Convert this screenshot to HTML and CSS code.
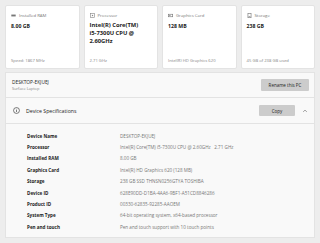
FILE: index.html
```
<!DOCTYPE html>
<html>
<head>
<meta charset="utf-8">
<link rel="stylesheet" href="styles.css">
</head>
<body>
<div class="page">
  <div class="cards">
    <div class="card">
      <div class="card-label"><svg class="ico" viewBox="0 0 8 8"><rect x="0.5" y="2.5" width="7" height="3" fill="#777"/></svg>Installed RAM</div>
      <div class="card-value">8.00 GB</div>
      <div class="card-foot">Speed: 1867 MHz</div>
    </div>
    <div class="card">
      <div class="card-label"><svg class="ico" viewBox="0 0 8 8"><rect x="1" y="1" width="6" height="6" fill="none" stroke="#888" stroke-width="1"/><rect x="3" y="3" width="2" height="2" fill="#888"/></svg>Processor</div>
      <div class="card-value big">Intel(R) Core(TM) i5&#8209;7300U CPU @ 2.60GHz</div>
      <div class="card-foot">2.71 GHz</div>
    </div>
    <div class="card">
      <div class="card-label"><svg class="ico" viewBox="0 0 8 8"><rect x="0.5" y="2" width="7" height="4" fill="none" stroke="#777" stroke-width="1"/><rect x="2" y="3.3" width="2" height="1.4" fill="#777"/></svg>Graphics Card</div>
      <div class="card-value">128 MB</div>
      <div class="card-foot">Intel(R) HD Graphics 620</div>
    </div>
    <div class="card">
      <div class="card-label"><svg class="ico" viewBox="0 0 8 8"><rect x="1.5" y="0.5" width="5" height="7" fill="none" stroke="#777" stroke-width="1"/><rect x="2.5" y="5" width="3" height="1" fill="#777"/></svg>Storage</div>
      <div class="card-value">238 GB</div>
      <div class="card-foot">45 GB of 238 GB used</div>
    </div>
  </div>

  <div class="group">
    <div class="row name-row">
      <div class="name">
        <div class="pc-name">DESKTOP-EKJUEJ</div>
        <div class="pc-model">Surface Laptop</div>
      </div>
      <button class="btn rename">Rename this PC</button>
    </div>
    <div class="row spec-head">
      <svg class="info" viewBox="0 0 10 10"><circle cx="5" cy="5" r="4.2" fill="none" stroke="#333" stroke-width="0.9"/><rect x="4.55" y="4.2" width="0.9" height="3" fill="#333"/><circle cx="5" cy="3" r="0.55" fill="#333"/></svg>
      <span class="spec-title">Device Specifications</span>
      <button class="btn copy">Copy</button>
      <svg class="chev" viewBox="0 0 8 8"><path d="M1.5 5.2 L4 2.8 L6.5 5.2" fill="none" stroke="#666" stroke-width="0.8"/></svg>
    </div>
    <div class="specs">
      <div class="k">Device Name</div><div class="v">DESKTOP-EKJUEJ</div>
      <div class="k">Processor</div><div class="v">Intel(R) Core(TM) i5-7300U CPU @ 2.60GHz&nbsp;&nbsp;&nbsp;2.71 GHz</div>
      <div class="k">Installed RAM</div><div class="v">8.00 GB</div>
      <div class="k">Graphics Card</div><div class="v">Intel(R) HD Graphics 620 (128 MB)</div>
      <div class="k">Storage</div><div class="v">238 GB SSD THNSN0256GTYA TOSHIBA</div>
      <div class="k">Device ID</div><div class="v">628E90DD-D1BA-4AA6-9BF1-A51CD8846286</div>
      <div class="k">Product ID</div><div class="v">00330-62835-92285-AAOEM</div>
      <div class="k">System Type</div><div class="v">64-bit operating system, x64-based processor</div>
      <div class="k">Pen and touch</div><div class="v">Pen and touch support with 10 touch points</div>
    </div>
  </div>
</div>
</body>
</html>
```
FILE: styles.css
```
* { box-sizing: border-box; }
html, body { margin: 0; padding: 0; }
body {
  background: #ededed;
  font-family: "Open Sans", "Noto Sans", "Liberation Sans", sans-serif;
  color: #222;
  width: 320px;
  height: 243px;
  overflow: hidden;
}
.page {
  padding: 5px 5px 0 5px;
}
.cards {
  display: grid;
  grid-template-columns: repeat(4, 1fr);
  gap: 4px;
  height: 64px;
}
.card {
  background: #fff;
  border: 1px solid #e3e3e3;
  border-radius: 2px;
  padding: 6px 5px 5px 5px;
  display: flex;
  flex-direction: column;
}
.card-label {
  display: flex;
  align-items: center;
  gap: 3px;
  font-size: 4.3px;
  color: #777;
  height: 6px;
}
.ico { width: 5px; height: 5px; flex: none; }
.card-value {
  margin-top: 5px;
  font-size: 5.2px;
  font-weight: 700;
  color: #222;
  line-height: 7px;
}
.card-value.big { font-size: 5.8px; line-height: 7.8px; margin-top: 4px; }
.card-foot {
  margin-top: auto;
  font-size: 4.2px;
  color: #888;
}
.group {
  margin-top: 3px;
  background: #f9f9f9;
  border: 1px solid #e3e3e3;
}
.row {
  display: flex;
  align-items: center;
  border-bottom: 1px solid #e3e3e3;
}
.name-row {
  height: 25px;
  padding: 0 5px 0 6px;
  justify-content: space-between;
}
.pc-name { font-size: 4.8px; color: #222; }
.pc-model { font-size: 3.9px; color: #888; margin-top: 1px; }
.btn {
  font-family: inherit;
  border: none;
  background: #cccccc;
  color: #222;
  font-size: 4.5px;
  padding: 0;
  border-radius: 1px;
}
.rename { width: 48px; height: 12px; }
.spec-head {
  height: 26px;
  padding: 0 6px 0 7px;
}
.info { width: 7px; height: 7px; flex: none; }
.spec-title { font-size: 5.2px; margin-left: 6px; flex: 1; color: #222; }
.copy { width: 36px; height: 11px; margin-right: 7px; }
.chev { width: 6px; height: 6px; }
.specs {
  display: grid;
  grid-template-columns: 93px 1fr;
  grid-auto-rows: 11.4px;
  align-items: center;
  padding: 6px 0 4px 21px;
  font-size: 4.6px;
}
.k { font-weight: 700; color: #222; }
.v { color: #777; white-space: nowrap; }
```
